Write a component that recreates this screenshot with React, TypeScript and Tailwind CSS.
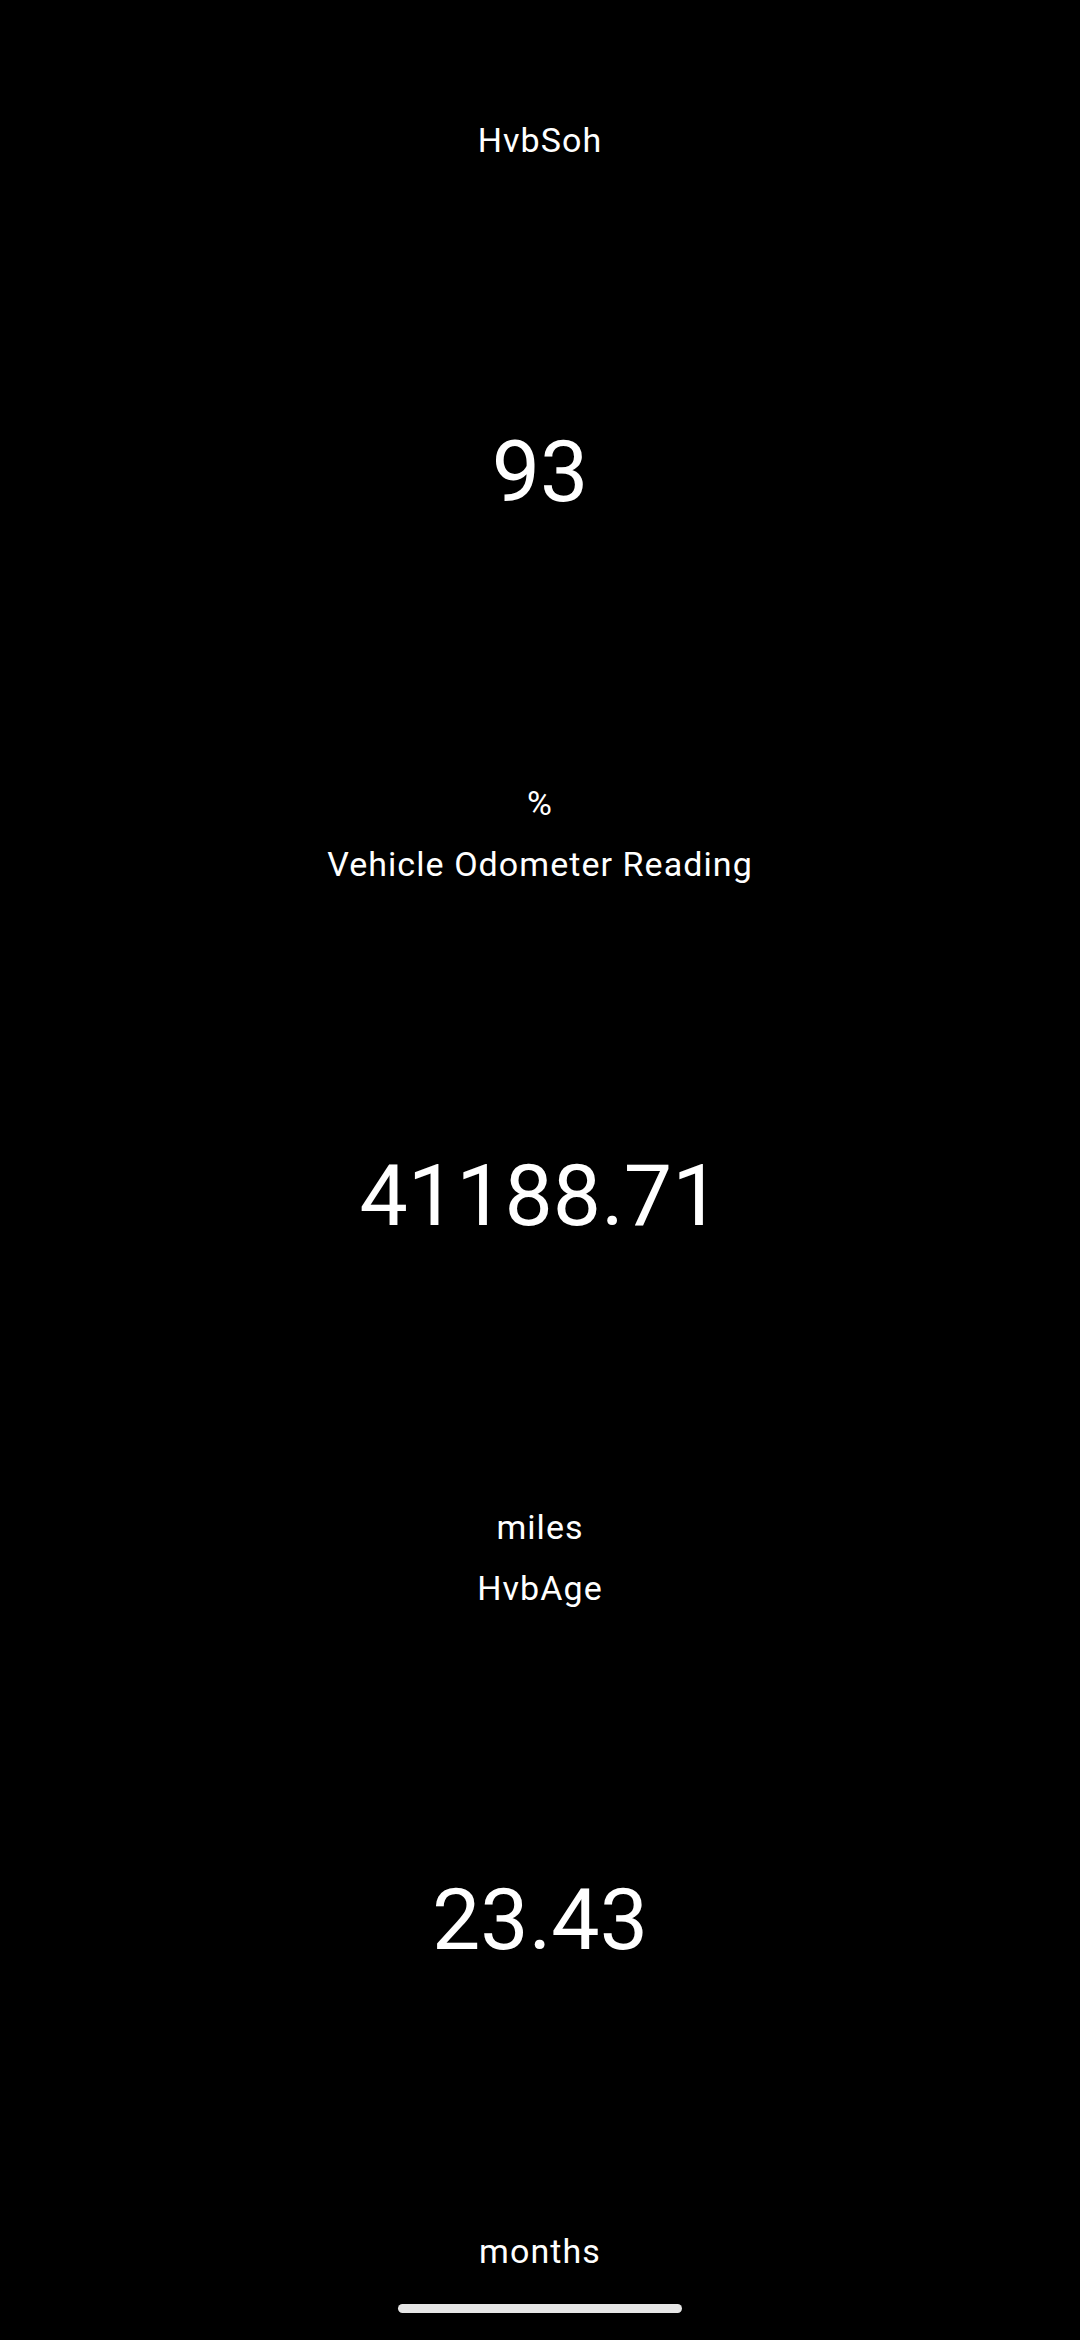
const readings = [
  { label: "HvbSoh", value: "93", unit: "%" },
  { label: "Vehicle Odometer Reading", value: "41188.71", unit: "miles" },
  { label: "HvbAge", value: "23.43", unit: "months" },
];

const Reading = ({ label, value, unit }: { label: string; value: string; unit: string }) => (
  <div className="flex flex-col items-center pb-[21px]">
    <p className="text-[34px] leading-[40px] tracking-[0.03125em]">{label}</p>
    <div className="flex h-[623px] items-center">
      <p className="text-[86px] leading-[102px]">{value}</p>
    </div>
    <p className="text-[34px] leading-[40px] tracking-[0.03125em]">{unit}</p>
  </div>
);

export default function App() {
  return (
    <div
      className="relative min-h-[2340px] w-full overflow-hidden bg-black pt-[120px] text-white"
      style={{ fontFamily: "Roboto, 'Noto Sans', sans-serif" }}
    >
      {readings.map((r) => (
        <Reading key={r.label} {...r} />
      ))}
      <div className="absolute bottom-[27px] left-[398px] h-[9px] w-[284px] rounded-full bg-[#e6e6e6]" />
    </div>
  );
}
